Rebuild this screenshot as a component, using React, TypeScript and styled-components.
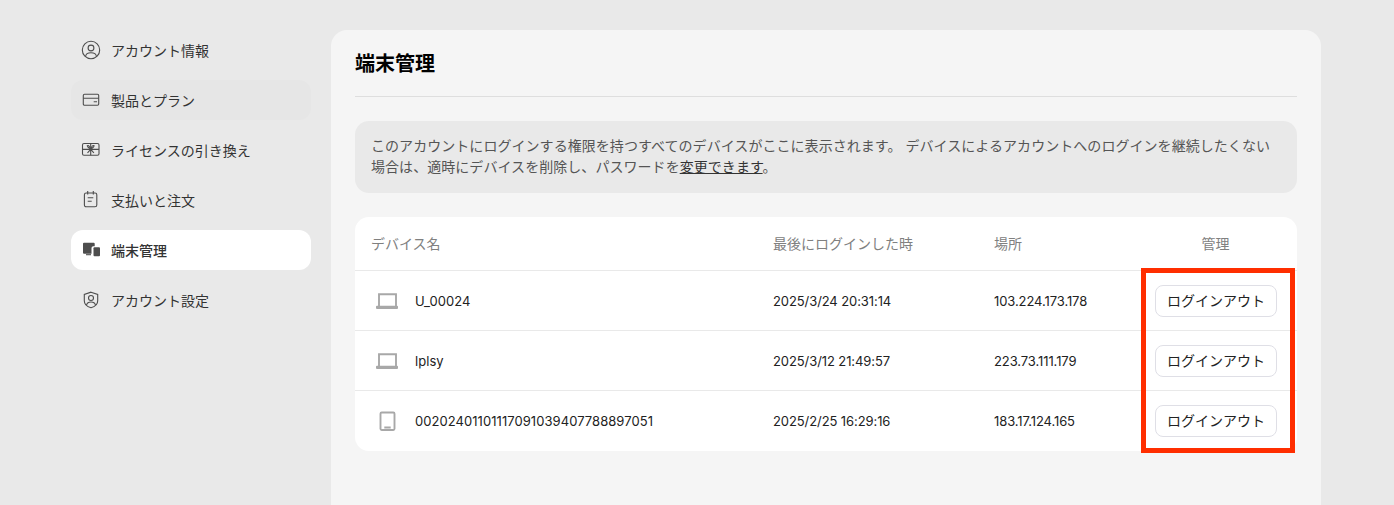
import styled, { createGlobalStyle } from 'styled-components'
import type { ReactNode } from 'react'

const Global = createGlobalStyle`
  html, body {
    margin: 0;
    height: 100%;
    overflow: hidden;
    background: #e9e9e9;
  }
  body {
    font-family: Inter, "Noto Sans CJK JP", sans-serif;
    color: #222;
  }
`

const Page = styled.div`
  display: flex;
  gap: 20px;
  padding: 30px 73px 0 71px;
  height: 505px;
  box-sizing: border-box;
`

const Side = styled.nav`
  width: 240px;
  flex: none;
  display: flex;
  flex-direction: column;
  gap: 10px;
`

const NavItem = styled.a<{ $active?: boolean; $hover?: boolean }>`
  height: 40px;
  display: flex;
  align-items: center;
  gap: 10px;
  padding-left: 10px;
  border-radius: 12px;
  font-size: 14px;
  color: #333;
  font-weight: ${p => (p.$active ? 500 : 400)};
  background: ${p => (p.$active ? '#fff' : p.$hover ? '#e6e6e6' : 'transparent')};
`

const NavIcon = styled.svg`
  width: 20px;
  height: 20px;
  flex: none;
  fill: none;
  stroke: #4d4d4d;
  stroke-width: 1.1;
`

const Panel = styled.main`
  flex: 1;
  position: relative;
  background: #f5f5f5;
  border-radius: 16px 16px 0 0;
  padding: 0 24px;
  height: 600px;
`

const Title = styled.h1`
  margin: 0;
  height: 67px;
  box-sizing: border-box;
  border-bottom: 1px solid #dedede;
  padding-top: 20px;
  font-size: 20px;
  line-height: 28px;
  font-weight: 700;
  color: #000;
`

const Notice = styled.p`
  margin: 24px 0 24px;
  height: 72px;
  box-sizing: border-box;
  padding: 14px 16px;
  background: #e9e9e9;
  border-radius: 14px;
  font-size: 14px;
  line-height: 21px;
  letter-spacing: 0.05px;
  color: #555;
  a {
    color: #333;
    text-decoration: underline;
  }
`

const Table = styled.div`
  background: #fff;
  border-radius: 14px;
  overflow: hidden;
`

const Row = styled.div<{ $head?: boolean }>`
  display: grid;
  grid-template-columns: 402px 221px 150px 1fr;
  align-items: center;
  height: ${p => (p.$head ? '54px' : '60px')};
  box-sizing: border-box;
  padding-left: 16px;
  padding-bottom: ${p => (p.$head ? '2px' : '0')};
  font-size: ${p => (p.$head ? '14px' : '13px')};
  color: ${p => (p.$head ? '#808080' : '#222')};
  border-bottom: 1px solid #e9e9e9;
  &:last-child {
    border-bottom: none;
  }
`

const DeviceCell = styled.div`
  display: flex;
  align-items: center;
  gap: 12px;
  letter-spacing: 0.06px;
`

const DataCell = styled.div`
  letter-spacing: -0.09px;
`

const DeviceIcon = styled.svg`
  width: 32px;
  height: 32px;
  flex: none;
  fill: none;
  stroke: #a8a8a8;
  stroke-width: 1.9;
`

const Manage = styled.div`
  display: flex;
  justify-content: center;
  padding-right: 10px;
`

const Logout = styled.button`
  width: 122px;
  height: 32px;
  padding: 0 0 2px 1px;
  background: #fff;
  border: 1px solid #dfdfe6;
  border-radius: 8px;
  font: inherit;
  font-size: 14px;
  color: #222;
`

const Highlight = styled.div`
  position: absolute;
  left: 810px;
  top: 238px;
  width: 154px;
  height: 185px;
  box-sizing: border-box;
  border: 5px solid #ff2e00;
  pointer-events: none;
`

const navIcons: Record<string, ReactNode> = {
  user: (
    <>
      <circle cx="10" cy="10" r="8.7" />
      <circle cx="10" cy="8" r="2.9" />
      <path d="M4.500 16.500c.3-2.400 2.500-3.800 5.500-3.800s5.200 1.400 5.500 3.800" />
    </>
  ),
  card: (
    <>
      <rect x="2.300" y="4.300" width="15.400" height="11" rx="1.200" />
      <path d="M2.300 8.300h15.400M12.700 11.800h3.300" />
    </>
  ),
  gift: (
    <>
      <rect x="1.500" y="3.500" width="16.500" height="11.800" rx="1.500" />
      <path d="M1.500 9.400h16.500M9.700 3.500v11.800" />
      <path d="M9.700 9.400C8 8 6.500 7 6.300 5.800c1.300-.9 2.900.9 3.400 3.600 .5-2.700 2.100-4.500 3.400-3.600-.2 1.200-1.700 2.200-3.400 3.600zM9.700 9.400l-3.200 3.400M9.700 9.400l3.200 3.400" />
    </>
  ),
  note: (
    <>
      <rect x="3.400" y="3" width="12.400" height="13.800" rx="1.800" />
      <path d="M6.700 1v3.500M12.300 1v3.500M6.700 7.800h5.600M6.700 11.300h4" />
    </>
  ),
  shield: (
    <>
      <path d="M10 2.200l6.700 2.300v6.300c0 3.200-2.900 6-6.700 6.900-3.800-.9-6.700-3.700-6.700-6.900V4.500z" />
      <circle cx="10" cy="8" r="2.500" />
      <path d="M5.500 15c.5-2 2.300-3 4.500-3s4 1 4.500 3" />
    </>
  ),
}

const Nav = ({ icon, label, active, hover }: { icon: string; label: string; active?: boolean; hover?: boolean }) => (
  <NavItem $active={active} $hover={hover}>
    <NavIcon viewBox="0 0 20 20">
      {icon === 'devices' ? (
        <>
          <path d="M3 2.700h9.700a1 1 0 0 1 1 1v2.600h-1.400a1.800 1.800 0 0 0-1.800 1.800v5.600H3a1 1 0 0 1-1-1v-9a1 1 0 0 1 1-1z" fill="#4d4d4d" stroke="none" />
          <path d="M5 14.700h5" />
          <rect x="12.500" y="7.200" width="6.500" height="9" rx="1" fill="#4d4d4d" stroke="none" />
        </>
      ) : navIcons[icon]}
    </NavIcon>
    {label}
  </NavItem>
)

const Laptop = () => (
  <DeviceIcon viewBox="0 0 32 32">
    <path d="M8 21V9.200h17V21" />
    <rect x="5" y="20.800" width="22" height="3.200" rx="1" fill="#a8a8a8" stroke="none" />
  </DeviceIcon>
)

const Tablet = () => (
  <DeviceIcon viewBox="0 0 32 32">
    <rect x="9.500" y="7.500" width="14" height="17.500" rx="1.200" />
    <path d="M13.300 22.500h6.400" />
  </DeviceIcon>
)

const devices = [
  { name: 'U_00024', time: '2025/3/24 20:31:14', ip: '103.224.173.178', icon: <Laptop /> },
  { name: 'lplsy', time: '2025/3/12 21:49:57', ip: '223.73.111.179', icon: <Laptop /> },
  { name: '00202401101117091039407788897051', time: '2025/2/25 16:29:16', ip: '183.17.124.165', icon: <Tablet /> },
]

export default function App() {
  return (
    <Page>
      <Global />
      <Side>
        <Nav icon="user" label="アカウント情報" />
        <Nav icon="card" label="製品とプラン" hover />
        <Nav icon="gift" label="ライセンスの引き換え" />
        <Nav icon="note" label="支払いと注文" />
        <Nav icon="devices" label="端末管理" active />
        <Nav icon="shield" label="アカウント設定" />
      </Side>
      <Panel>
        <Title>端末管理</Title>
        <Notice>
          このアカウントにログインする権限を持つすべてのデバイスがここに表示されます。 デバイスによるアカウントへのログインを継続したくない場合は、適時にデバイスを削除し、パスワードを<a>変更できます</a>。
        </Notice>
        <Table>
          <Row $head>
            <div>デバイス名</div>
            <div>最後にログインした時</div>
            <div>場所</div>
            <Manage>管理</Manage>
          </Row>
          {devices.map(d => (
            <Row key={d.name}>
              <DeviceCell>
                {d.icon}
                {d.name}
              </DeviceCell>
              <DataCell>{d.time}</DataCell>
              <DataCell>{d.ip}</DataCell>
              <Manage>
                <Logout>ログインアウト</Logout>
              </Manage>
            </Row>
          ))}
        </Table>
        <Highlight />
      </Panel>
    </Page>
  )
}
